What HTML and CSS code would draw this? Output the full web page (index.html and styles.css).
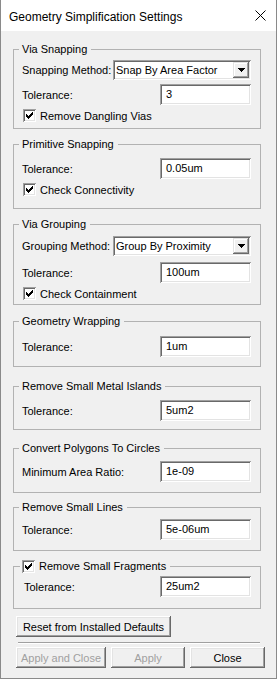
FILE: index.html
```html
<!DOCTYPE html>
<html>
<head>
<meta charset="utf-8">
<link rel="stylesheet" href="styles.css">
</head>
<body>
<div class="window">
  <div class="titlebar">
    <span class="title">Geometry Simplification Settings</span>
    <svg class="close" width="11" height="11" viewBox="0 0 11 11"><path d="M0.5 0.5 L10.5 10.5 M10.5 0.5 L0.5 10.5" stroke="#000" stroke-width="1" fill="none"/></svg>
  </div>
  <div class="content">
    <div class="group g1">
      <div class="gtitle">Via Snapping</div>
      <div class="row mt4">
        <span>Snapping Method:</span>
        <div class="combo"><span class="combo-text">Snap By Area Factor</span><span class="combo-btn"><svg width="7" height="4" viewBox="0 0 7 4" shape-rendering="crispEdges"><path d="M0 0H7V1H6V2H5V3H4V4H3V3H2V2H1V1H0Z" fill="#000"/></svg></span></div>
      </div>
      <div class="row mt4">
        <span>Tolerance:</span>
        <div class="input">3</div>
      </div>
      <div class="cbrow mt3">
        <span class="cb"><svg width="7" height="7" viewBox="0 0 7 7" shape-rendering="crispEdges"><path d="M0 2H1V3H2V4H3V3H4V2H5V1H6V0H7V3H6V4H5V5H4V6H3V7H2V6H1V5H0Z" fill="#000"/></svg></span>
        <span>Remove Dangling Vias</span>
      </div>
    </div>

    <div class="group g2">
      <div class="gtitle">Primitive Snapping</div>
      <div class="row mt7">
        <span>Tolerance:</span>
        <div class="input">0.05um</div>
      </div>
      <div class="cbrow mt3">
        <span class="cb"><svg width="7" height="7" viewBox="0 0 7 7" shape-rendering="crispEdges"><path d="M0 2H1V3H2V4H3V3H4V2H5V1H6V0H7V3H6V4H5V5H4V6H3V7H2V6H1V5H0Z" fill="#000"/></svg></span>
        <span>Check Connectivity</span>
      </div>
    </div>

    <div class="group g3">
      <div class="gtitle">Via Grouping</div>
      <div class="row mt5">
        <span>Grouping Method:</span>
        <div class="combo"><span class="combo-text">Group By Proximity</span><span class="combo-btn"><svg width="7" height="4" viewBox="0 0 7 4" shape-rendering="crispEdges"><path d="M0 0H7V1H6V2H5V3H4V4H3V3H2V2H1V1H0Z" fill="#000"/></svg></span></div>
      </div>
      <div class="row mt6">
        <span>Tolerance:</span>
        <div class="input">100um</div>
      </div>
      <div class="cbrow mt3">
        <span class="cb"><svg width="7" height="7" viewBox="0 0 7 7" shape-rendering="crispEdges"><path d="M0 2H1V3H2V4H3V3H4V2H5V1H6V0H7V3H6V4H5V5H4V6H3V7H2V6H1V5H0Z" fill="#000"/></svg></span>
        <span>Check Containment</span>
      </div>
    </div>

    <div class="group g4">
      <div class="gtitle">Geometry Wrapping</div>
      <div class="row mt8">
        <span>Tolerance:</span>
        <div class="input">1um</div>
      </div>
    </div>

    <div class="group g5">
      <div class="gtitle">Remove Small Metal Islands</div>
      <div class="row mt7">
        <span>Tolerance:</span>
        <div class="input">5um2</div>
      </div>
    </div>

    <div class="group g6">
      <div class="gtitle">Convert Polygons To Circles</div>
      <div class="row mt6">
        <span>Minimum Area Ratio:</span>
        <div class="input">1e-09</div>
      </div>
    </div>

    <div class="group g7">
      <div class="gtitle">Remove Small Lines</div>
      <div class="row mt5">
        <span>Tolerance:</span>
        <div class="input">5e-06um</div>
      </div>
    </div>

    <div class="group g8">
      <div class="gtitle gtitle-cb">
        <span class="cb"><svg width="7" height="7" viewBox="0 0 7 7" shape-rendering="crispEdges"><path d="M0 2H1V3H2V4H3V3H4V2H5V1H6V0H7V3H6V4H5V5H4V6H3V7H2V6H1V5H0Z" fill="#000"/></svg></span>
        <span>Remove Small Fragments</span>
      </div>
      <div class="row mt3 indent">
        <span>Tolerance:</span>
        <div class="input">25um2</div>
      </div>
    </div>

    <div class="btn reset">Reset from Installed Defaults</div>
    <div class="separator"></div>
    <div class="buttons">
      <div class="btn disabled w-ac">Apply and Close</div>
      <div class="btn disabled w-apply">Apply</div>
      <div class="btn w-close">Close</div>
    </div>
  </div>
</div>
</body>
</html>
```

FILE: styles.css
```css
html, body {
  margin: 0;
  padding: 0;
  background: #ffffff;
}

body {
  font-family: "Liberation Sans", Arial, sans-serif;
  font-size: 11px;
  color: #000;
}

.window {
  width: 277px;
  height: 679px;
  box-sizing: border-box;
  border: 1px solid #8a8a8a;
  border-top: none;
  background: #f0f0f0;
  display: flex;
  flex-direction: column;
  overflow: hidden;
}

.titlebar {
  flex: none;
  height: 31px;
  box-sizing: border-box;
  background: #fff;
  display: flex;
  align-items: center;
  justify-content: space-between;
  padding: 2px 10px 0 8px;
  font-size: 12px;
  color: #000;
}

.close {
  display: block;
  margin-top: -2px;
}

.content {
  flex: 1;
  display: flex;
  flex-direction: column;
  padding: 0 15px 0 12px;
}

.group {
  border: 1px solid #b2b2b2;
  padding: 0 9px 0 8px;
  display: flex;
  flex-direction: column;
}

.g1 { margin-top: 18px; padding-bottom: 5px; }
.g2 { margin-top: 15px; padding-bottom: 11px; }
.g3 { margin-top: 15px; padding-bottom: 3px; }
.g4 { margin-top: 16px; padding-bottom: 9px; }
.g5 { margin-top: 19px; padding-bottom: 8px; }
.g6 { margin-top: 18px; padding-bottom: 10px; }
.g7 { margin-top: 14px; padding-bottom: 10px; }
.g8 { margin-top: 15px; padding-bottom: 11px; }

.gtitle {
  align-self: flex-start;
  margin: -7px 0 0 -3px;
  padding: 0 4px 0 3px;
  height: 13px;
  line-height: 13px;
  background: #f0f0f0;
  white-space: nowrap;
}

.gtitle-cb {
  display: flex;
  align-items: center;
  gap: 4px;
  margin-left: -2px;
  padding-left: 2px;
}

.mt3 { margin-top: 3px; }
.mt4 { margin-top: 4px; }
.mt5 { margin-top: 5px; }
.mt6 { margin-top: 6px; }
.mt7 { margin-top: 7px; }
.mt8 { margin-top: 8px; }

.row {
  display: flex;
  align-items: center;
  justify-content: space-between;
  white-space: nowrap;
}

.indent {
  padding-left: 2px;
}

.combo {
  width: 138px;
  height: 20px;
  box-sizing: border-box;
  padding: 2px;
  background: #fff;
  box-shadow: inset 1px 1px #a0a0a0, inset -1px -1px #fff, inset 2px 2px #696969, inset -2px -2px #e3e3e3;
  display: flex;
  align-items: center;
}

.combo-text {
  flex: 1;
  padding-left: 1px;
}

.combo-btn {
  width: 16px;
  height: 16px;
  background: #f0f0f0;
  box-shadow: inset -1px -1px #696969, inset 1px 1px #e3e3e3, inset -2px -2px #a0a0a0, inset 2px 2px #fff;
  display: flex;
  align-items: center;
  justify-content: center;
}

.combo-btn svg {
  display: block;
}

.input {
  width: 91px;
  height: 21px;
  box-sizing: border-box;
  padding: 0 4px 2px 6px;
  background: #fff;
  box-shadow: inset 1px 1px #a0a0a0, inset -1px -1px #fff, inset 2px 2px #696969, inset -2px -2px #e3e3e3;
  display: flex;
  align-items: center;
}

.cbrow {
  height: 15px;
  display: flex;
  align-items: center;
  gap: 4px;
  padding-left: 1px;
}

.cb {
  width: 13px;
  height: 13px;
  flex: none;
  box-sizing: border-box;
  background: #fff;
  box-shadow: inset 1px 1px #a0a0a0, inset -1px -1px #fff, inset 2px 2px #696969, inset -2px -2px #e3e3e3;
  display: flex;
  align-items: center;
  justify-content: center;
}

.cb svg {
  display: block;
}

.btn {
  height: 21px;
  box-sizing: border-box;
  background: #f0f0f0;
  box-shadow: inset -1px -1px #696969, inset 1px 1px #fff, inset -2px -2px #a0a0a0, inset 2px 2px #e3e3e3;
  display: flex;
  align-items: center;
  justify-content: center;
  white-space: nowrap;
  flex: none;
}

.reset {
  margin-top: 7px;
  margin-left: 3px;
  width: 155px;
}

.separator {
  margin: 5px 1px 0 5px;
  height: 1px;
  background: #a0a0a0;
  border-bottom: 1px solid #fff;
}

.buttons {
  margin-top: 3px;
  margin-left: 3px;
  display: flex;
  gap: 5px;
}

.disabled {
  color: #a0a0a0;
}

.w-ac { width: 90px; }
.w-apply { width: 74px; }
.w-close { width: 75px; }
```
